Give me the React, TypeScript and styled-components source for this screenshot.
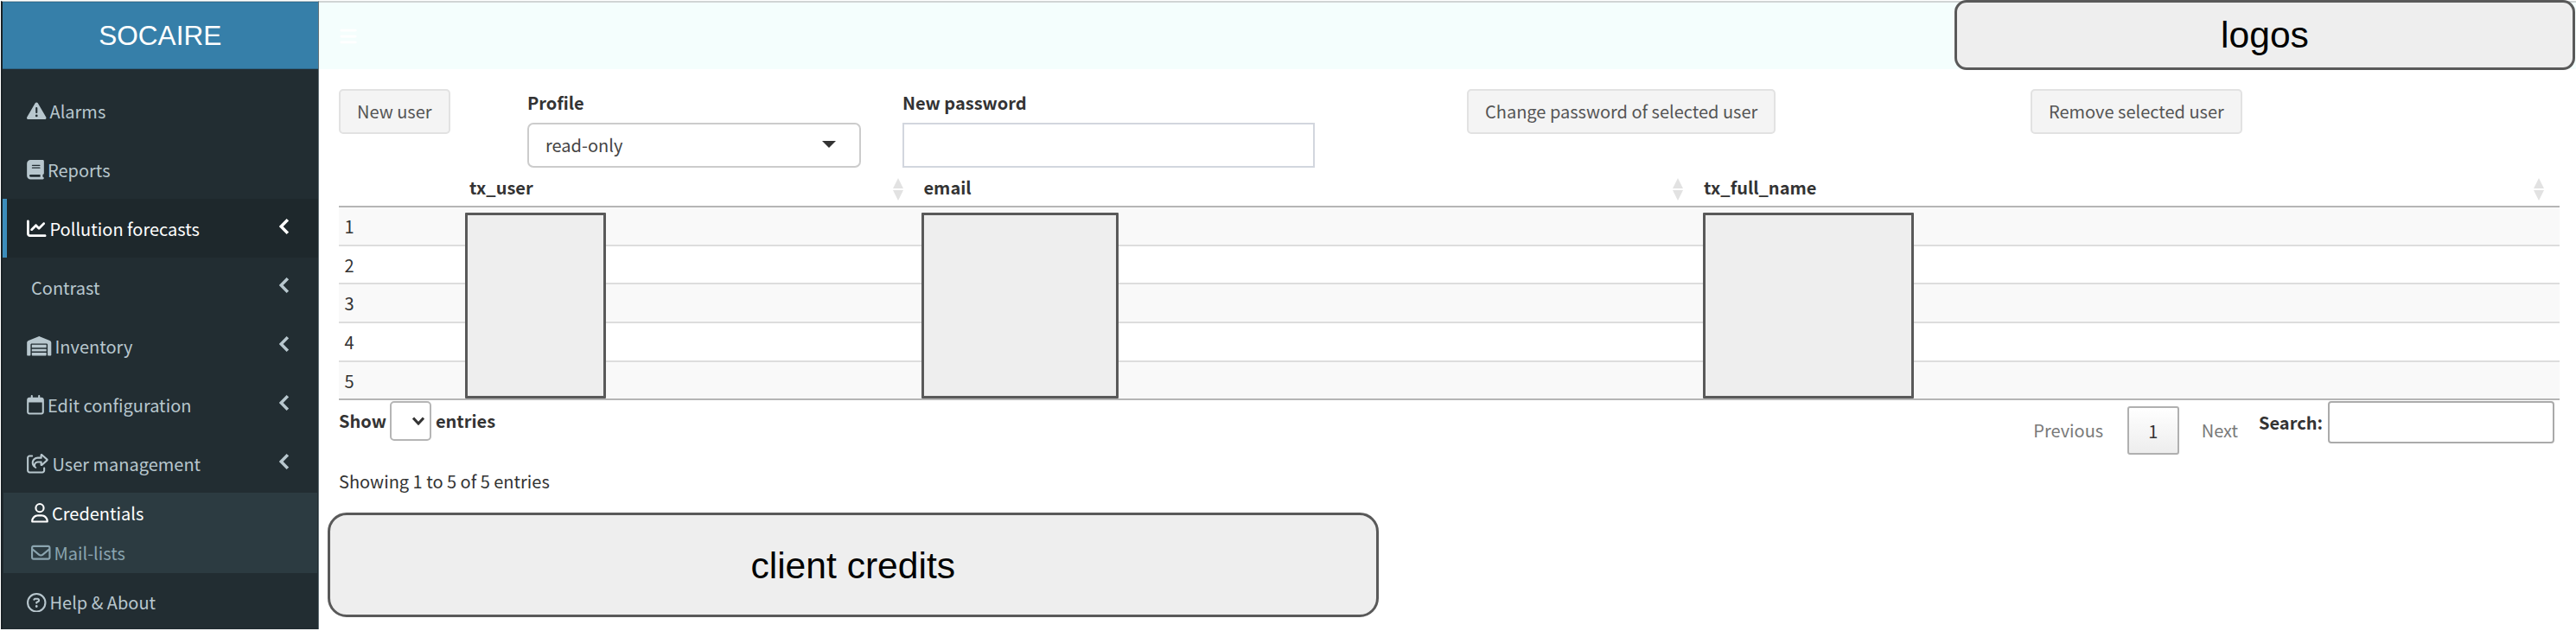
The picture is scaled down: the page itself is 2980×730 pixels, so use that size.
import React from 'react';
import styled, { createGlobalStyle } from 'styled-components';
import {
  FaTriangleExclamation,
  FaBook,
  FaChartLine,
  FaWarehouse,
  FaRegCalendar,
  FaRegShareFromSquare,
  FaRegUser,
  FaRegEnvelope,
  FaRegCircleQuestion,
  FaBars,
} from 'react-icons/fa6';

const GlobalStyle = createGlobalStyle`
  *, *::before, *::after { box-sizing: border-box; }
  body {
    margin: 0;
    background: #fff;
    color: #333;
    font-family: 'Noto Sans CJK SC', 'Noto Sans', sans-serif;
    font-size: 20px;
    line-height: 30px;
    overflow: hidden;
  }
  button, input { font: inherit; color: inherit; }
`;

const Page = styled.div`
  display: grid;
  grid-template-columns: 368.5px 1fr;
  width: 100%;
  height: 730px;
  padding-top: 1px;
`;

const Sidebar = styled.aside`
  display: flex;
  flex-direction: column;
  height: 727px;
  margin-left: 1px;
  background: #222d32;
  border-left: 2px solid #1a2226;
  border-right: 1px solid #66747a;
  border-top: 1px solid #b9c4c9;
`;

const Brand = styled.div`
  height: 79px;
  margin-bottom: 14px;
  background: #367fa9;
  border-top: 1px solid #2f6f95;
  border-bottom: 1px solid #2c6688;
  color: #fff;
  font-family: 'Liberation Sans', Arial, sans-serif;
  font-size: 31.6px;
  line-height: 76px;
  text-align: center;
`;

const MenuItem = styled.a<{ $active?: boolean; $indent?: number }>`
  display: flex;
  align-items: center;
  flex: 0 0 68px;
  padding: 1px 34px 0 ${(p) => 23 + (p.$indent ?? 0)}px;
  border-left: 5px solid ${(p) => (p.$active ? '#3c8dbc' : 'transparent')};
  background: ${(p) => (p.$active ? '#1e282c' : 'transparent')};
  color: ${(p) => (p.$active ? '#fff' : '#b8c7ce')};

  &:last-child {
    padding-top: 0;
  }
`;

const MenuIcon = styled.span<{ $width: number }>`
  display: inline-flex;
  margin-right: 4px;

  svg {
    width: ${(p) => p.$width}px;
    height: 22.5px;
  }
`;

const ChevronSvg = styled.svg`
  margin: -5px 0 0 auto;
  fill: none;
  stroke: currentColor;
  stroke-width: 3.4;
`;

const SubMenu = styled.div`
  flex: 0 0 93px;
  margin: 0 1px;
  padding-top: 0.5px;
  background: #2c3b41;
`;

const SubItem = styled.a<{ $active?: boolean }>`
  display: flex;
  align-items: center;
  height: 46px;
  padding-left: 32px;
  color: ${(p) => (p.$active ? '#fff' : '#8aa4af')};
`;

const Main = styled.main`
  display: flex;
  flex-direction: column;
  min-width: 0;
`;

const TopBar = styled.header`
  display: flex;
  align-items: center;
  justify-content: space-between;
  height: 79px;
  padding-left: 23px;
  border-top: 2px solid #d0d4d4;
  background: #f4fefd;
  color: #fff;
  font-size: 22px;
`;

const Placeholder = styled.div<{ $radius: number }>`
  display: flex;
  align-items: center;
  justify-content: center;
  border: 3px solid #595959;
  border-radius: ${(p) => p.$radius}px;
  background: #eee;
  color: #000;
  font-family: 'Liberation Sans', Arial, sans-serif;
  font-size: 42.6px;
  line-height: 48px;
`;

const LogoPlaceholder = styled(Placeholder)`
  width: 718px;
  height: 81px;
  margin: -3px 1px 0 0;
`;

const CreditsPlaceholder = styled(Placeholder)`
  width: 1216.5px;
  height: 121px;
  margin: 18px 0 0 10px;
  padding-top: 1px;
`;

const Form = styled.section`
  display: grid;
  grid-template-columns: 218px 434px 653px 652px 1fr;
  align-items: start;
  height: 120px;
  padding: 23px 0 0 23.5px;
`;

const Button = styled.button`
  justify-self: start;
  height: 52px;
  padding: 0 19px 1px;
  border: 2px solid #e2e2e2;
  border-radius: 5px;
  background: #f4f4f4;
  color: #555;
  white-space: nowrap;
`;

const Field = styled.label`
  display: flex;
  flex-direction: column;
`;

const FieldLabel = styled.span`
  height: 39px;
  padding-top: 0.5px;
  font-weight: 700;
`;

const SelectBox = styled.div`
  display: flex;
  align-items: center;
  justify-content: space-between;
  width: 386px;
  height: 52px;
  padding: 0 27px 0 19px;
  border: 2px solid #ccc;
  border-radius: 7px;
  color: #444;
`;

const Caret = styled.span`
  border: 8px solid transparent;
  border-top-color: #333;
  border-bottom: 0;
  margin-top: -2px;
`;

const PasswordInput = styled.input`
  width: 477px;
  height: 52px;
  border: 2px solid #d2d6de;
  background: #fff;
`;

const TableWrap = styled.section`
  position: relative;
  width: 2568.5px;
  margin-left: 23.5px;
`;

const HeadRow = styled.div`
  display: grid;
  grid-template-columns: 145px 525.5px 902.5px 1fr;
  height: 40px;
  border-bottom: 2px solid #b5b5b5;
  font-weight: 700;
`;

const HeadCell = styled.div`
  display: flex;
  align-items: center;
  justify-content: space-between;
  padding: 0 18px 4px 6px;
`;

const SortIcon = styled.svg`
  display: block;
  margin-top: 4px;
  fill: #e2e2e2;
`;

const Row = styled.div<{ $odd: boolean; $last: boolean }>`
  height: 44.7px;
  padding-left: 6.5px;
  border-bottom: ${(p) => (p.$last ? '2px solid #b5b5b5' : '2px solid #ddd')};
  background: ${(p) => (p.$odd ? '#f9f9f9' : '#fff')};
  line-height: 43px;
`;

const Redaction = styled.div<{ $left: number; $width: number }>`
  position: absolute;
  top: 45.5px;
  left: ${(p) => p.$left}px;
  width: ${(p) => p.$width}px;
  height: 215px;
  border: 3px solid #595959;
  border-radius: 1px;
  background: #eee;
`;

const Controls = styled.section`
  display: flex;
  justify-content: space-between;
  align-items: flex-start;
  width: 2563px;
  height: 75px;
  margin: 0.5px 0 0 23.5px;
`;

const Length = styled.div`
  display: flex;
  align-items: center;
  gap: 4.5px;
  height: 46px;
  font-weight: 700;
`;

const LengthSelect = styled.span`
  display: flex;
  align-items: center;
  justify-content: flex-end;
  width: 48px;
  height: 46px;
  padding-right: 6px;
  border: 2px solid #b5b5b5;
  border-radius: 5px;
`;

const Paging = styled.div`
  display: flex;
  align-items: flex-start;
`;

const PageLink = styled.span`
  margin-top: 19px;
  color: #7a7a7a;
`;

const CurrentPage = styled.span`
  width: 60px;
  height: 56px;
  margin: 6px 26px 0 27.5px;
  border: 2px solid #b0b0b0;
  border-radius: 3px;
  background: linear-gradient(#fff, #ededed);
  line-height: 54px;
  text-align: center;
`;

const Search = styled.label`
  display: flex;
  gap: 6px;
  margin-left: 24px;
  font-weight: 700;
  line-height: 50px;
`;

const SearchInput = styled.input`
  width: 262px;
  height: 49px;
  border: 2px solid #aaa;
  border-radius: 4px;
  background: #fff;
`;

const Info = styled.div`
  height: 36px;
  margin-left: 23.5px;
  line-height: 36px;
`;

const MENU = [
  { label: 'Alarms', icon: <FaTriangleExclamation />, width: 22.5 },
  { label: 'Reports', icon: <FaBook />, width: 20 },
  { label: 'Pollution forecasts', icon: <FaChartLine />, width: 22.5, active: true, arrow: true },
  { label: 'Contrast', indent: 5, arrow: true },
  { label: 'Inventory', icon: <FaWarehouse />, width: 28.5, arrow: true },
  { label: 'Edit configuration', icon: <FaRegCalendar />, width: 20, arrow: true },
  { label: 'User management', icon: <FaRegShareFromSquare />, width: 25.5, arrow: true },
];

const Chevron = () => (
  <ChevronSvg width="11" height="18" viewBox="0 0 11 18">
    <path d="M9.8 1.2L2.2 9l7.6 7.8" />
  </ChevronSvg>
);

const SortArrows = () => (
  <SortIcon width="12" height="26" viewBox="0 0 12 26">
    <path d="M6 0l6 12H0zM6 26l6-12H0z" />
  </SortIcon>
);

export default function App() {
  return (
    <Page>
      <GlobalStyle />
      <Sidebar>
        <Brand>SOCAIRE</Brand>
        {MENU.map((item) => (
          <MenuItem key={item.label} $active={item.active} $indent={item.indent}>
            {item.icon && <MenuIcon $width={item.width}>{item.icon}</MenuIcon>}
            {item.label}
            {item.arrow && <Chevron />}
          </MenuItem>
        ))}
        <SubMenu>
          <SubItem $active>
            <MenuIcon $width={20}><FaRegUser /></MenuIcon>
            Credentials
          </SubItem>
          <SubItem>
            <MenuIcon $width={22.5}><FaRegEnvelope /></MenuIcon>
            Mail-lists
          </SubItem>
        </SubMenu>
        <MenuItem>
          <MenuIcon $width={22.5}><FaRegCircleQuestion /></MenuIcon>
          Help &amp; About
        </MenuItem>
      </Sidebar>
      <Main>
        <TopBar>
          <FaBars />
          <LogoPlaceholder $radius={14}>logos</LogoPlaceholder>
        </TopBar>
        <Form>
          <Button>New user</Button>
          <Field>
            <FieldLabel>Profile</FieldLabel>
            <SelectBox>read-only<Caret /></SelectBox>
          </Field>
          <Field>
            <FieldLabel>New password</FieldLabel>
            <PasswordInput />
          </Field>
          <Button>Change password of selected user</Button>
          <Button>Remove selected user</Button>
        </Form>
        <TableWrap>
          <HeadRow>
            <div />
            {['tx_user', 'email', 'tx_full_name'].map((name) => (
              <HeadCell key={name}>{name}<SortArrows /></HeadCell>
            ))}
          </HeadRow>
          {[1, 2, 3, 4, 5].map((n) => (
            <Row key={n} $odd={n % 2 === 1} $last={n === 5}>{n}</Row>
          ))}
          <Redaction $left={145.5} $width={163} />
          <Redaction $left={674} $width={228} />
          <Redaction $left={1577.5} $width={244} />
        </TableWrap>
        <Controls>
          <Length>
            Show
            <LengthSelect>
              <svg width="14" height="10" viewBox="0 0 14 10" fill="none" stroke="#333" strokeWidth="3">
                <path d="M1 1.5L7 8l6-6.5" />
              </svg>
            </LengthSelect>
            entries
          </Length>
          <Paging>
            <PageLink>Previous</PageLink>
            <CurrentPage>1</CurrentPage>
            <PageLink>Next</PageLink>
            <Search>Search:<SearchInput /></Search>
          </Paging>
        </Controls>
        <Info>Showing 1 to 5 of 5 entries</Info>
        <CreditsPlaceholder $radius={22}>client credits</CreditsPlaceholder>
      </Main>
    </Page>
  );
}
